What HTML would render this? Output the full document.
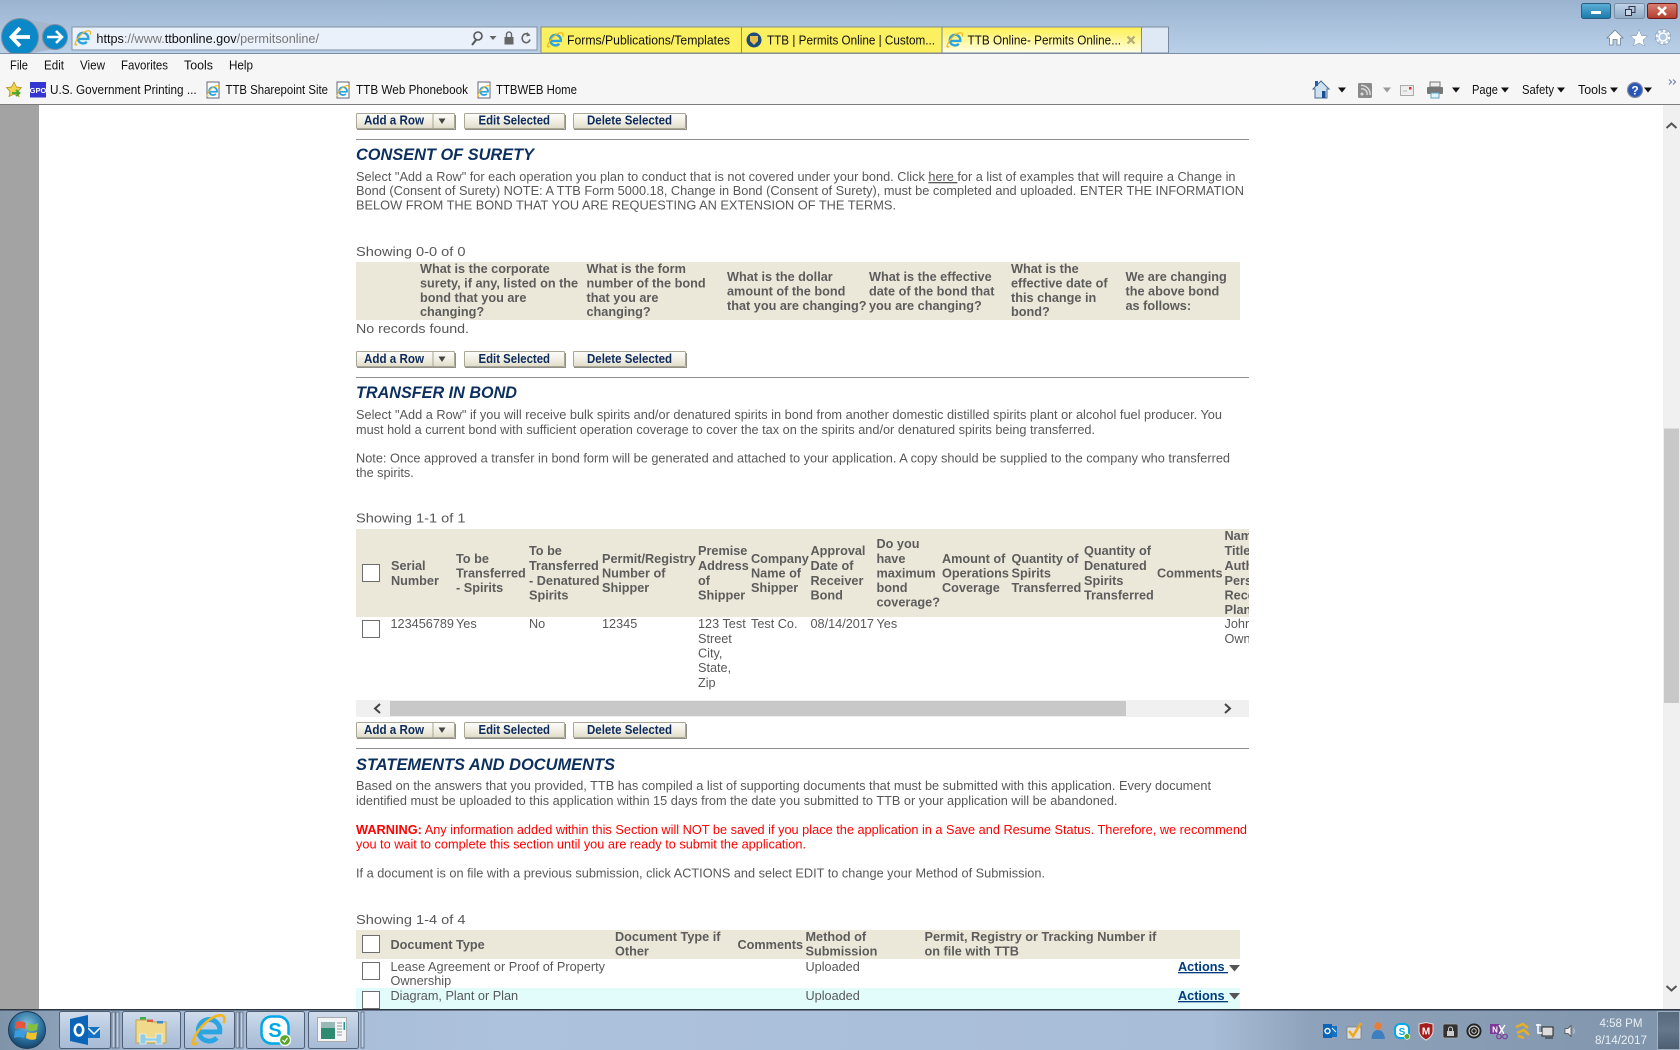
<!DOCTYPE html>
<html><head><meta charset="utf-8"><title>TTB Online- Permits Online</title>
<style>
html,body{margin:0;padding:0;background:#fff;overflow:hidden}
svg{display:block}
text{font-family:"Liberation Sans",Arial,sans-serif;white-space:pre}
.b{font-size:13.2px;fill:#585858}
.s{font-size:13.2px;fill:#585858;transform-box:fill-box;transform-origin:0 50%;transform:scaleX(.962)}
.h{font-size:13.2px;font-weight:bold;fill:#5c5c5c;transform-box:fill-box;transform-origin:0 50%;transform:scaleX(.962)}
.t{font-size:17px;font-weight:bold;font-style:italic;fill:#0b2f5e}
.bt{font-size:12.6px;font-weight:bold;fill:#0c2a5c}
.u{font-size:12.8px;fill:#111}
.a{font-size:13.2px;font-weight:bold;fill:#003b7c;text-decoration:underline;transform-box:fill-box;transform-origin:0 50%;transform:scaleX(.962)}
.r{font-size:13.2px;fill:#f00}
.c{font-size:12.4px;fill:#e9eff6}
</style></head><body>
<svg xmlns="http://www.w3.org/2000/svg" width="1680" height="1050" viewBox="0 0 1680 1050">
<defs>
<linearGradient id="top" x1="0" y1="0" x2="0" y2="1"><stop offset="0" stop-color="#9ab3cf"/><stop offset="1" stop-color="#bad0e9"/></linearGradient>
<linearGradient id="tab3" x1="0" y1="0" x2="0" y2="1"><stop offset="0" stop-color="#fff04f"/><stop offset=".6" stop-color="#fff9a8"/><stop offset="1" stop-color="#fffde8"/></linearGradient>
<linearGradient id="btn" x1="0" y1="0" x2="0" y2="1"><stop offset="0" stop-color="#fdfdfb"/><stop offset=".6" stop-color="#efecdf"/><stop offset="1" stop-color="#dedbc9"/></linearGradient>
<linearGradient id="tb" x1="0" y1="0" x2="1" y2="0"><stop offset="0" stop-color="#7f93a9"/><stop offset=".1" stop-color="#a4b9d3"/><stop offset=".3" stop-color="#adc2dd"/><stop offset=".72" stop-color="#a8bdd7"/><stop offset=".78" stop-color="#8ea3bb"/><stop offset="1" stop-color="#8095ab"/></linearGradient>
<linearGradient id="tbb" x1="0" y1="0" x2="0" y2="1"><stop offset="0" stop-color="#cfdcec"/><stop offset=".5" stop-color="#b8c9df"/><stop offset="1" stop-color="#a8bbd5"/></linearGradient>
<linearGradient id="min" x1="0" y1="0" x2="0" y2="1"><stop offset="0" stop-color="#5fb0d8"/><stop offset="1" stop-color="#1878a8"/></linearGradient>
<linearGradient id="res" x1="0" y1="0" x2="0" y2="1"><stop offset="0" stop-color="#c0d4e8"/><stop offset="1" stop-color="#8fabc5"/></linearGradient>
<linearGradient id="cls" x1="0" y1="0" x2="0" y2="1"><stop offset="0" stop-color="#d98072"/><stop offset="1" stop-color="#b23c2c"/></linearGradient>
<linearGradient id="sd" x1="0" y1="0" x2="0" y2="1"><stop offset="0" stop-color="#586a7d"/><stop offset=".5" stop-color="#64778b"/><stop offset="1" stop-color="#4d5e70"/></linearGradient>
<radialGradient id="orb" cx=".5" cy=".35" r=".7"><stop offset="0" stop-color="#7fc0dc"/><stop offset=".6" stop-color="#2a6f9e"/><stop offset="1" stop-color="#133a5c"/></radialGradient>
<clipPath id="tc"><rect x="356" y="500" width="893" height="220"/></clipPath>
<clipPath id="topc"><rect x="0" y="0" width="140" height="53"/></clipPath>
<g id="ie"><path d="M-9 2H11A11 11 0 1 0 8 8" fill="none" stroke="#2aa5e2" stroke-width="5"/><path d="M-12 13C-21 20-16 4-3-8C8-17 19-18 15-7" fill="none" stroke="#f4b61f" stroke-width="2.6"/></g>
<g id="pg"><rect x="-6" y="-8" width="12" height="16" fill="#fff" stroke="#667" stroke-width="1"/><g transform="translate(0,1) scale(.36)"><use href="#ie"/></g></g>
<g id="bts"><rect x="356.5" y=".5" width="98" height="15" rx="1" fill="url(#btn)" stroke="#aaa796"/><path d="M455.5 2V16.5H357" fill="none" stroke="#8f8f88"/><path d="M433 1V15" stroke="#aaa796"/><path d="M438.5 5.500H445.500L442 11Z" fill="#444"/>
<rect x="464.5" y=".5" width="100" height="15" rx="1" fill="url(#btn)" stroke="#aaa796"/><path d="M565.5 2V16.5H465" fill="none" stroke="#8f8f88"/>
<rect x="573.5" y=".5" width="112" height="15" rx="1" fill="url(#btn)" stroke="#aaa796"/><path d="M686.5 2V16.5H574" fill="none" stroke="#8f8f88"/></g>
<rect id="cb" width="17" height="17" fill="#fff" stroke="#6d6d6d"/>
<path id="dn" d="M-4-2.5H4L0 2.5Z" fill="#111"/>
</defs>

<!-- Browser chrome -->
<rect width="1680" height="53" fill="url(#top)"/>
<rect y="53" width="1680" height="51" fill="#f6f6f6"/>
<rect y="53" width="1680" height="1" fill="#7f8fa3"/>
<rect y="104" width="1680" height="1" fill="#7c7c7c"/>
<g clip-path="url(#topc)">
<path d="M20 19L42 22L55 25L55 49L20 55Z" fill="#a5b6ca"/>
<circle cx="20" cy="37" r="18.5" fill="#0b88c8" stroke="#7d8ea3"/>
<circle cx="55" cy="37" r="12.5" fill="#0b88c8" stroke="#7d8ea3"/>
<path d="M30 37H12M20 28L11.500 37L20 46" fill="none" stroke="#fff" stroke-width="3.800"/>
<path d="M47 37H62M56 31L62 37L56 43" fill="none" stroke="#fff" stroke-width="2.600"/>
</g>
<rect x="72" y="27" width="465" height="23" fill="#eaf1fa" stroke="#8292a6"/>
<use href="#ie" transform="translate(83,38) scale(.48)"/>
<text x="96.400" y="43" class="u" textLength="222.600" lengthAdjust="spacingAndGlyphs"><tspan fill="#111">https</tspan><tspan fill="#777">://www.</tspan><tspan fill="#111">ttbonline.gov</tspan><tspan fill="#777">/permitsonline/</tspan></text>
<circle cx="478" cy="36" r="4" fill="none" stroke="#555" stroke-width="1.600"/><path d="M476 40L472 45" stroke="#555" stroke-width="2"/>
<path d="M489.500 36H496.500L493 40Z" fill="#666"/>
<rect x="504.500" y="37" width="9" height="7.500" fill="#666"/><path d="M506.500 37V34.500A2.500 2.500 0 0 1 511.500 34.500V37" fill="none" stroke="#666" stroke-width="1.400"/>
<path d="M529 35A4 4.500 0 1 0 530 39.500" fill="none" stroke="#666" stroke-width="1.600"/><path d="M527 32L530.500 35.500L526.500 36.500Z" fill="#666"/>

<rect x="541" y="27" width="200.500" height="26" fill="#fbf05f" stroke="#8a8f80"/>
<rect x="741.500" y="27" width="200.500" height="26" fill="#fbf05f" stroke="#8a8f80"/>
<rect x="942" y="27" width="199.500" height="26" fill="url(#tab3)" stroke="#7a8ba0"/>
<rect x="1141.500" y="27" width="27" height="26" fill="#dfe9f6" stroke="#7a8ba0"/>
<use href="#ie" transform="translate(555.500,40) scale(.48)"/>
<text x="567" y="44.500" class="u" textLength="163" lengthAdjust="spacingAndGlyphs">Forms/Publications/Templates</text>
<circle cx="754" cy="40" r="7.500" fill="#1f4a7c"/><path d="M750 36H758V41L754 45L750 41Z" fill="#e3c04a"/>
<text x="767" y="44.500" class="u" textLength="168" lengthAdjust="spacingAndGlyphs">TTB | Permits Online | Custom...</text>
<use href="#ie" transform="translate(955,40) scale(.48)"/>
<text x="967.500" y="44.500" class="u" textLength="153.500" lengthAdjust="spacingAndGlyphs">TTB Online- Permits Online...</text>
<path d="M1127.500 36.500L1134.500 43.500M1134.500 36.500L1127.500 43.500" stroke="#b2ab75" stroke-width="2.200"/>

<!-- window buttons -->
<rect x="1581.500" y="3.500" width="29" height="15" rx="2" fill="url(#min)" stroke="#2b5f7f"/><rect x="1591" y="11" width="10" height="3" fill="#fff"/>
<rect x="1614.500" y="3.500" width="30" height="15" rx="2" fill="url(#res)" stroke="#7b8fa5"/><rect x="1629" y="6.500" width="6" height="6" fill="none" stroke="#334"/><rect x="1625.500" y="9.500" width="6" height="6" fill="#c8d8e6" stroke="#334"/>
<rect x="1647.500" y="3.500" width="29.500" height="15" rx="2" fill="url(#cls)" stroke="#6d1a18"/><path d="M1658 7L1666 15M1666 7L1658 15" stroke="#fff" stroke-width="2.600"/>
<!-- home star gear -->
<path d="M1615 30L1623 38H1620.500V45H1617V39.500H1613V45H1609.500V38H1607Z" fill="#fff" stroke="#6c7f95" stroke-width=".8"/>
<path d="M1639 29.500L1641.500 35.500L1647.500 36L1643 40L1644.500 46L1639 43L1633.500 46L1635 40L1630.500 36L1636.500 35.500Z" fill="#fff" stroke="#7a8ca2" stroke-width=".5"/>
<circle cx="1663" cy="37" r="4" fill="none" stroke="#fff" stroke-width="1.600"/><circle cx="1663" cy="37" r="6.500" fill="none" stroke="#fff" stroke-width="2.500" stroke-dasharray="2.200 2.900"/><circle cx="1663" cy="37" r="7.800" fill="none" stroke="#7a8ca2" stroke-width=".5"/>

<!-- menu -->
<text x="10" y="69.500" class="u" textLength="18" lengthAdjust="spacingAndGlyphs">File</text>
<text x="44" y="69.500" class="u" textLength="20" lengthAdjust="spacingAndGlyphs">Edit</text>
<text x="80" y="69.500" class="u" textLength="25" lengthAdjust="spacingAndGlyphs">View</text>
<text x="121" y="69.500" class="u" textLength="47" lengthAdjust="spacingAndGlyphs">Favorites</text>
<text x="184" y="69.500" class="u" textLength="29" lengthAdjust="spacingAndGlyphs">Tools</text>
<text x="229" y="69.500" class="u" textLength="24" lengthAdjust="spacingAndGlyphs">Help</text>

<!-- favorites -->
<path d="M14 82L16.500 87L21.500 87.500L18 91.500L19 96.500L14 94L9 96.500L10 91.500L6.500 87.500L11.500 87Z" fill="#f2d24a" stroke="#a88a20" stroke-width=".7"/><path d="M12 93H19M16 90L19.500 93L16 96" fill="none" stroke="#3fa52c" stroke-width="1.800"/>
<rect x="30" y="82" width="16" height="15.500" fill="#3535cf"/><text x="38" y="93" font-size="7.500" font-weight="bold" fill="#fff" text-anchor="middle">GPO</text>
<text x="50" y="94" class="u" textLength="146.600" lengthAdjust="spacingAndGlyphs">U.S. Government Printing ...</text>
<use href="#pg" transform="translate(213,90)"/>
<text x="225.500" y="94" class="u" textLength="102.500" lengthAdjust="spacingAndGlyphs">TTB Sharepoint Site</text>
<use href="#pg" transform="translate(343,90)"/>
<text x="356" y="94" class="u" textLength="112" lengthAdjust="spacingAndGlyphs">TTB Web Phonebook</text>
<use href="#pg" transform="translate(484,90)"/>
<text x="496" y="94" class="u" textLength="81" lengthAdjust="spacingAndGlyphs">TTBWEB Home</text>

<!-- command bar -->
<path d="M1321 81L1329 89H1327V98H1315V89H1313Z" fill="#cfe0ee" stroke="#4a6a92"/><rect x="1322" y="91" width="3.500" height="7" fill="#1b4e8e"/><rect x="1315" y="81" width="3" height="5" fill="#2a5da8"/>
<use href="#dn" transform="translate(1342,90)"/>
<rect x="1358" y="83" width="14" height="15" rx="1.500" fill="#8a8a8a"/><circle cx="1362" cy="94" r="1.500" fill="#ddd"/><path d="M1361 89A5 5 0 0 1 1367 95M1361 85.500A8.500 8.500 0 0 1 1370 95" fill="none" stroke="#ddd" stroke-width="1.400"/>
<path d="M1383 87.500H1391L1387 92.500Z" fill="#999"/>
<rect x="1400.500" y="85.500" width="13" height="10" fill="#eee" stroke="#aaa"/><rect x="1409" y="87" width="2.500" height="2.500" fill="#e03030"/><path d="M1403 91H1407" stroke="#bbb"/>
<rect x="1430" y="82" width="10" height="5" fill="#eee" stroke="#777"/><rect x="1427" y="87" width="16" height="7" rx="1" fill="#777"/><rect x="1431" y="93" width="8" height="5" fill="#e8f4fa" stroke="#5aa5d0"/>
<use href="#dn" transform="translate(1456,90)"/>
<text x="1472" y="94" class="u" textLength="26" lengthAdjust="spacingAndGlyphs">Page</text><use href="#dn" transform="translate(1505,90)"/>
<text x="1522" y="94" class="u" textLength="32" lengthAdjust="spacingAndGlyphs">Safety</text><use href="#dn" transform="translate(1561,90)"/>
<text x="1578" y="94" class="u" textLength="29" lengthAdjust="spacingAndGlyphs">Tools</text><use href="#dn" transform="translate(1614,90)"/>
<circle cx="1635" cy="90" r="7.500" fill="#2956b8" stroke="#8a8fa0" stroke-width="1.200"/><text x="1635" y="94.500" font-size="12" font-weight="bold" fill="#fff" text-anchor="middle">?</text>
<use href="#dn" transform="translate(1648,90)"/>
<path d="M1669 79.500L1671.500 82L1669 84.500M1673 79.500L1675.500 82L1673 84.500" fill="none" stroke="#6a7fa8" stroke-width="1.100"/>

<!-- page margins -->
<rect x="0" y="105" width="39" height="905" fill="#a3a3a3"/>
<rect x="1663" y="105" width="17" height="905" fill="#f0f0f0"/>
<rect x="1664" y="428.500" width="15" height="274.500" fill="#c8c8c8"/>
<path d="M1666.500 128L1671.500 123.500L1676.500 128" fill="none" stroke="#555" stroke-width="2"/>
<path d="M1666.500 986L1671.500 990.500L1676.500 986" fill="none" stroke="#555" stroke-width="2"/>

<!-- buttons 1 -->
<use href="#bts" transform="translate(0,113)"/>
<text x="364" y="124.500" class="bt" textLength="60" lengthAdjust="spacingAndGlyphs">Add a Row</text>
<text x="478.500" y="124.500" class="bt" textLength="71.500" lengthAdjust="spacingAndGlyphs">Edit Selected</text>
<text x="587" y="124.500" class="bt" textLength="85" lengthAdjust="spacingAndGlyphs">Delete Selected</text>
<rect x="356" y="139" width="893" height="1" fill="#8f8f8f"/>

<!-- consent -->
<text x="356" y="160" class="t" textLength="178" lengthAdjust="spacingAndGlyphs">CONSENT OF SURETY</text>
<text x="356" y="181" class="b" textLength="879.500" lengthAdjust="spacingAndGlyphs">Select "Add a Row" for each operation you plan to conduct that is not covered under your bond. Click <tspan text-decoration="underline">here </tspan>for a list of examples that will require a Change in</text>
<text x="356" y="195" class="b" textLength="888" lengthAdjust="spacingAndGlyphs">Bond (Consent of Surety) NOTE: A TTB Form 5000.18, Change in Bond (Consent of Surety), must be completed and uploaded. ENTER THE INFORMATION</text>
<text x="356" y="209.500" class="b" textLength="540" lengthAdjust="spacingAndGlyphs">BELOW FROM THE BOND THAT YOU ARE REQUESTING AN EXTENSION OF THE TERMS.</text>
<text x="356" y="256" class="b" textLength="109.500" lengthAdjust="spacingAndGlyphs">Showing 0-0 of 0</text>
<rect x="356" y="262" width="884" height="58" fill="#ece8d9"/>
<text x="420" y="273" class="h">What is the corporate</text>
<text x="420" y="287.500" class="h">surety, if any, listed on the</text>
<text x="420" y="302" class="h">bond that you are</text>
<text x="420" y="316" class="h">changing?</text>
<text x="586.500" y="273" class="h">What is the form</text>
<text x="586.500" y="287.500" class="h">number of the bond</text>
<text x="586.500" y="302" class="h">that you are</text>
<text x="586.500" y="316" class="h">changing?</text>
<text x="727" y="281" class="h">What is the dollar</text>
<text x="727" y="295.500" class="h">amount of the bond</text>
<text x="727" y="310" class="h">that you are changing?</text>
<text x="869" y="281" class="h">What is the effective</text>
<text x="869" y="295.500" class="h">date of the bond that</text>
<text x="869" y="310" class="h">you are changing?</text>
<text x="1011" y="273" class="h">What is the</text>
<text x="1011" y="287.500" class="h">effective date of</text>
<text x="1011" y="302" class="h">this change in</text>
<text x="1011" y="316" class="h">bond?</text>
<text x="1125.500" y="281" class="h">We are changing</text>
<text x="1125.500" y="295.500" class="h">the above bond</text>
<text x="1125.500" y="310" class="h">as follows:</text>
<text x="356" y="333" class="b" textLength="113" lengthAdjust="spacingAndGlyphs">No records found.</text>

<use href="#bts" transform="translate(0,351)"/>
<text x="364" y="363" class="bt" textLength="60" lengthAdjust="spacingAndGlyphs">Add a Row</text>
<text x="478.500" y="363" class="bt" textLength="71.500" lengthAdjust="spacingAndGlyphs">Edit Selected</text>
<text x="587" y="363" class="bt" textLength="85" lengthAdjust="spacingAndGlyphs">Delete Selected</text>
<rect x="356" y="377" width="893" height="1" fill="#8f8f8f"/>

<!-- transfer -->
<text x="356" y="398" class="t" textLength="161" lengthAdjust="spacingAndGlyphs">TRANSFER IN BOND</text>
<text x="356" y="419" class="b" textLength="866" lengthAdjust="spacingAndGlyphs">Select "Add a Row" if you will receive bulk spirits and/or denatured spirits in bond from another domestic distilled spirits plant or alcohol fuel producer. You</text>
<text x="356" y="434" class="b" textLength="739" lengthAdjust="spacingAndGlyphs">must hold a current bond with sufficient operation coverage to cover the tax on the spirits and/or denatured spirits being transferred.</text>
<text x="356" y="462.500" class="b" textLength="874" lengthAdjust="spacingAndGlyphs">Note: Once approved a transfer in bond form will be generated and attached to your application. A copy should be supplied to the company who transferred</text>
<text x="356" y="477" class="s">the spirits.</text>
<text x="356" y="522.500" class="b" textLength="109.500" lengthAdjust="spacingAndGlyphs">Showing 1-1 of 1</text>
<rect x="356" y="529" width="893" height="88" fill="#ece8d9"/>
<use href="#cb" x="362.500" y="564.500"/>
<g clip-path="url(#tc)">
<text x="391" y="570" class="h">Serial</text><text x="391" y="585" class="h">Number</text>
<text x="456" y="563" class="h">To be</text><text x="456" y="577.500" class="h">Transferred</text><text x="456" y="592" class="h">- Spirits</text>
<text x="529" y="555" class="h">To be</text><text x="529" y="570" class="h">Transferred</text><text x="529" y="585" class="h">- Denatured</text><text x="529" y="599.500" class="h">Spirits</text>
<text x="602" y="563" class="h">Permit/Registry</text><text x="602" y="577.500" class="h">Number of</text><text x="602" y="592" class="h">Shipper</text>
<text x="698" y="555" class="h">Premise</text><text x="698" y="570" class="h">Address</text><text x="698" y="585" class="h">of</text><text x="698" y="599.500" class="h">Shipper</text>
<text x="751" y="563" class="h">Company</text><text x="751" y="577.500" class="h">Name of</text><text x="751" y="592" class="h">Shipper</text>
<text x="810.500" y="555" class="h">Approval</text><text x="810.500" y="570" class="h">Date of</text><text x="810.500" y="585" class="h">Receiver</text><text x="810.500" y="599.500" class="h">Bond</text>
<text x="876.500" y="548" class="h">Do you</text><text x="876.500" y="563" class="h">have</text><text x="876.500" y="577.500" class="h">maximum</text><text x="876.500" y="592" class="h">bond</text><text x="876.500" y="606.500" class="h">coverage?</text>
<text x="942" y="563" class="h">Amount of</text><text x="942" y="577.500" class="h">Operations</text><text x="942" y="592" class="h">Coverage</text>
<text x="1011.500" y="563" class="h">Quantity of</text><text x="1011.500" y="577.500" class="h">Spirits</text><text x="1011.500" y="592" class="h">Transferred</text>
<text x="1084" y="555" class="h">Quantity of</text><text x="1084" y="570" class="h">Denatured</text><text x="1084" y="585" class="h">Spirits</text><text x="1084" y="599.500" class="h">Transferred</text>
<text x="1157" y="577.500" class="h">Comments</text>
<text x="1224.500" y="540" class="h">Name,</text><text x="1224.500" y="555" class="h">Title of</text><text x="1224.500" y="570" class="h">Authorized</text><text x="1224.500" y="585" class="h">Person</text><text x="1224.500" y="599.500" class="h">Receiving</text><text x="1224.500" y="614" class="h">Plant</text>
<text x="1224.500" y="628" class="s">John Doe</text><text x="1224.500" y="643" class="s">Owner</text>
</g>
<use href="#cb" x="362.500" y="620.500"/>
<text x="390.500" y="628" class="s">123456789</text>
<text x="456" y="628" class="s">Yes</text>
<text x="529" y="628" class="s">No</text>
<text x="602" y="628" class="s">12345</text>
<text x="698" y="628" class="s">123 Test</text><text x="698" y="643" class="s">Street</text><text x="698" y="657.500" class="s">City,</text><text x="698" y="672" class="s">State,</text><text x="698" y="687" class="s">Zip</text>
<text x="751" y="628" class="s">Test Co.</text>
<text x="810.500" y="628" class="s">08/14/2017</text>
<text x="876.500" y="628" class="s">Yes</text>
<rect x="356" y="700" width="893" height="17" fill="#f0f0f0"/>
<rect x="390" y="701" width="736" height="15" fill="#c8c8c8"/>
<path d="M380 704L375 708.500L380 713" fill="none" stroke="#444" stroke-width="2"/>
<path d="M1225 704L1230 708.500L1225 713" fill="none" stroke="#444" stroke-width="2"/>

<use href="#bts" transform="translate(0,722)"/>
<text x="364" y="734" class="bt" textLength="60" lengthAdjust="spacingAndGlyphs">Add a Row</text>
<text x="478.500" y="734" class="bt" textLength="71.500" lengthAdjust="spacingAndGlyphs">Edit Selected</text>
<text x="587" y="734" class="bt" textLength="85" lengthAdjust="spacingAndGlyphs">Delete Selected</text>
<rect x="356" y="748" width="893" height="1" fill="#8f8f8f"/>

<!-- statements -->
<text x="356" y="770" class="t" textLength="259" lengthAdjust="spacingAndGlyphs">STATEMENTS AND DOCUMENTS</text>
<text x="356" y="790" class="b" textLength="855" lengthAdjust="spacingAndGlyphs">Based on the answers that you provided, TTB has compiled a list of supporting documents that must be submitted with this application. Every document</text>
<text x="356" y="805" class="b" textLength="761.500" lengthAdjust="spacingAndGlyphs">identified must be uploaded to this application within 15 days from the date you submitted to TTB or your application will be abandoned.</text>
<text x="356" y="834" class="r" textLength="891" lengthAdjust="spacingAndGlyphs"><tspan font-weight="bold">WARNING:</tspan> Any information added within this Section will NOT be saved if you place the application in a Save and Resume Status. Therefore, we recommend</text>
<text x="356" y="848.500" class="r" textLength="450" lengthAdjust="spacingAndGlyphs">you to wait to complete this section until you are ready to submit the application.</text>
<text x="356" y="877.500" class="b" textLength="689" lengthAdjust="spacingAndGlyphs">If a document is on file with a previous submission, click ACTIONS and select EDIT to change your Method of Submission.</text>
<text x="356" y="924" class="b" textLength="109.500" lengthAdjust="spacingAndGlyphs">Showing 1-4 of 4</text>
<rect x="356" y="930" width="884" height="29" fill="#ece8d9"/>
<use href="#cb" x="362.500" y="935.500"/>
<text x="390.500" y="949" class="h">Document Type</text>
<text x="615" y="941" class="h">Document Type if</text><text x="615" y="955.500" class="h">Other</text>
<text x="737.500" y="949" class="h">Comments</text>
<text x="805.500" y="941" class="h">Method of</text><text x="805.500" y="955.500" class="h">Submission</text>
<text x="924.500" y="941" class="h">Permit, Registry or Tracking Number if</text><text x="924.500" y="955.500" class="h">on file with TTB</text>
<use href="#cb" x="362.500" y="962.500"/>
<text x="390.500" y="971" class="b" textLength="214.500" lengthAdjust="spacingAndGlyphs">Lease Agreement or Proof of Property</text>
<text x="390.500" y="985" class="s">Ownership</text>
<text x="805.500" y="971" class="s">Uploaded</text>
<text x="1178" y="971" class="a">Actions </text>
<path d="M1229 965H1240L1234.500 971.500Z" fill="#555"/>
<rect x="356" y="988" width="884" height="22" fill="#e2fbfb"/>
<use href="#cb" x="362.500" y="991.500"/>
<text x="390.500" y="1000" class="s">Diagram, Plant or Plan</text>
<text x="805.500" y="1000" class="s">Uploaded</text>
<text x="1178" y="1000" class="a">Actions </text>
<path d="M1229 993H1240L1234.500 999.500Z" fill="#555"/>

<!-- taskbar -->
<rect y="1010" width="1680" height="40" fill="url(#tb)"/>
<rect y="1009" width="1680" height="1.500" fill="#2b3440"/>
<circle cx="27" cy="1030" r="18.500" fill="url(#orb)" stroke="#1c3a56"/>
<path d="M16 1022Q21 1020 26 1023L25 1029Q20 1027 15 1029Z" fill="#e8553a"/>
<path d="M28 1023Q33 1026 38 1023L37 1030Q32 1032 27 1030Z" fill="#84c041"/>
<path d="M15 1031Q20 1029 25 1032L24 1038Q19 1036 14 1038Z" fill="#3a9de0"/>
<path d="M27 1032Q32 1034 37 1032L36 1039Q31 1041 26 1038Z" fill="#f3c32b"/>

<g fill="url(#tbb)" stroke="#4f6076">
<rect x="59.500" y="1011.500" width="51" height="37" rx="2"/>
<rect x="122.500" y="1011.500" width="58" height="37" rx="2"/>
<rect x="184.500" y="1011.500" width="50" height="37" rx="2"/>
<rect x="246.500" y="1011.500" width="58" height="37" rx="2"/>
<rect x="308.500" y="1011.500" width="50" height="37" rx="2"/>
</g>
<g fill="#c0cfe2" stroke="#55667c" stroke-width=".8">
<rect x="112" y="1012" width="3" height="36"/><rect x="116" y="1012" width="3" height="36"/>
<rect x="236" y="1012" width="3" height="36"/><rect x="240" y="1012" width="3" height="36"/>
<rect x="361" y="1012" width="3" height="36"/>
</g>
<!-- outlook -->
<rect x="88" y="1027" width="12" height="11" fill="#1272c4"/><path d="M88 1028L94 1034L100 1028" fill="none" stroke="#fff" stroke-width="1.500"/>
<path d="M70 1019L88 1015V1045L70 1041Z" fill="#0a64b8"/>
<ellipse cx="79" cy="1030" rx="4.200" ry="5.500" fill="none" stroke="#fff" stroke-width="2.600"/>
<!-- explorer -->
<path d="M136 1020H150L152 1022H166V1043H136Z" fill="#f0d98a" stroke="#b9a35d"/>
<rect x="140" y="1017" width="6" height="2.500" fill="#3fae49"/><rect x="147" y="1019.500" width="6" height="2.500" fill="#e05a3f"/><rect x="157" y="1021" width="6" height="2.500" fill="#3a8ad0"/>
<path d="M140 1044V1034H146V1038H156V1034H162V1044H156V1041H146V1044Z" fill="#90cde8" stroke="#fff" stroke-width=".6"/>
<!-- ie -->
<use href="#ie" transform="translate(209,1030) scale(.98)"/>
<!-- skype -->
<rect x="261.500" y="1016.500" width="27" height="27" rx="10" fill="#fff" stroke="#00a8e8" stroke-width="2.500"/>
<text x="275" y="1037" font-size="20" font-weight="bold" fill="#00a8e8" text-anchor="middle">S</text>
<circle cx="285" cy="1040" r="5.500" fill="#5aa52a" stroke="#fff" stroke-width="1.200"/><path d="M282.500 1040L284.500 1042L287.500 1038" fill="none" stroke="#fff" stroke-width="1.200"/>
<!-- window app -->
<rect x="317.500" y="1017.500" width="29" height="24" fill="#f3f5f6" stroke="#aaa"/>
<rect x="321" y="1022" width="14" height="17" fill="#2e8a70"/><rect x="321" y="1022" width="14" height="6" fill="#9ab8b8"/>
<path d="M337 1023H342M337 1026H342M337 1029H342M337 1032H342M337 1035H342" stroke="#999"/>
<rect x="343.500" y="1022" width="1.500" height="8" fill="#1f9a9a"/>

<!-- tray -->
<rect x="1324" y="1026" width="13" height="11" fill="#1272c4"/><path d="M1323 1024H1332V1038H1323Z" fill="#0a64b8"/><circle cx="1327.500" cy="1031" r="2.500" fill="none" stroke="#fff" stroke-width="1.400"/><path d="M1332 1028L1336 1032" stroke="#fff"/>
<rect x="1347" y="1027" width="14" height="12" fill="#ddd" stroke="#777" stroke-width=".7"/><path d="M1349 1031L1353 1036L1361 1023" fill="none" stroke="#f0a818" stroke-width="2.600"/>
<circle cx="1378" cy="1026" r="3.800" fill="#e87d3a"/><path d="M1371.500 1039Q1372 1030 1378 1030Q1384 1030 1385 1039Z" fill="#3f7fc0"/>
<rect x="1395" y="1024" width="14" height="14" rx="5" fill="#fff" stroke="#00a8e8" stroke-width="2"/><text x="1402" y="1035" font-size="10" font-weight="bold" fill="#00a8e8" text-anchor="middle">S</text><circle cx="1407" cy="1036.500" r="2.800" fill="#5aa52a" stroke="#fff" stroke-width=".6"/>
<path d="M1419 1024L1426 1022.500L1433 1024V1032Q1432 1037 1426 1040Q1420 1037 1419 1032Z" fill="#a61c1c" stroke="#ddd"/><text x="1426" y="1034.500" font-size="10" font-weight="bold" fill="#fff" text-anchor="middle">M</text>
<rect x="1443" y="1024" width="15" height="14" rx="2" fill="#333" stroke="#aaa" stroke-width=".7"/><rect x="1447" y="1031" width="7" height="5" fill="#ccc"/><path d="M1448.500 1031V1029A2 2 0 0 1 1452.500 1029V1031" fill="none" stroke="#ccc"/>
<circle cx="1474" cy="1031" r="7.500" fill="#222"/><circle cx="1474" cy="1031" r="5" fill="none" stroke="#ccc" stroke-width="1.200"/><circle cx="1474" cy="1031" r="2.200" fill="none" stroke="#ccc"/>
<rect x="1490" y="1024" width="10" height="10" fill="#7d3a9a"/><text x="1495" y="1032.500" font-size="8" font-weight="bold" fill="#fff" text-anchor="middle">N</text><path d="M1499 1025L1504 1034M1505 1025L1499 1034" stroke="#fff" stroke-width="1.300"/><circle cx="1499" cy="1036.500" r="2.300" fill="none" stroke="#7d3a9a" stroke-width="1.200"/><circle cx="1505" cy="1036.500" r="2.300" fill="none" stroke="#7d3a9a" stroke-width="1.200"/>
<path d="M1516 1027L1523 1024L1528 1028M1517 1033L1524 1030L1529 1035M1518 1036L1524 1038" fill="none" stroke="#e8b020" stroke-width="2.500"/>
<rect x="1542" y="1027" width="11" height="9" fill="#ddd" stroke="#222"/><path d="M1538 1024V1033H1542M1536 1025H1541" fill="none" stroke="#fff" stroke-width="1.500"/><path d="M1545 1038H1553" stroke="#222"/>
<path d="M1565 1028.500H1568L1571 1025.500V1036.500L1568 1033.500H1565Z" fill="#eee" stroke="#444" stroke-width=".7"/><path d="M1573.500 1028.500Q1575 1031 1573.500 1033.500" fill="none" stroke="#ccc"/>
<text x="1621" y="1027" class="c" text-anchor="middle" textLength="43" lengthAdjust="spacingAndGlyphs">4:58 PM</text>
<text x="1621" y="1044" class="c" text-anchor="middle" textLength="52" lengthAdjust="spacingAndGlyphs">8/14/2017</text>
<rect x="1657.500" y="1011.500" width="22" height="38" fill="url(#sd)" stroke="#9fb0c2"/>
</svg>
</body></html>
